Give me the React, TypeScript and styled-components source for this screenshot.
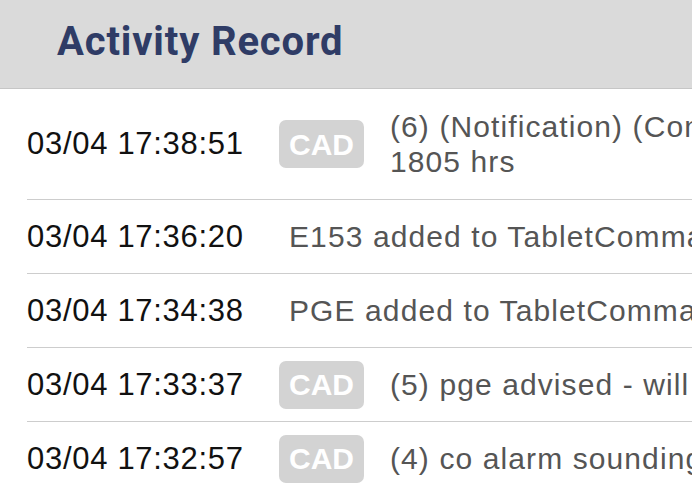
import React from "react";
import styled, { createGlobalStyle } from "styled-components";

const GlobalStyle = createGlobalStyle`
  html, body {
    margin: 0;
    padding: 0;
    background: #ffffff;
    overflow: hidden;
  }
  body {
    font-family: "Liberation Sans", Arial, sans-serif;
  }
`;

const Page = styled.div`
  width: 692px;
  height: 488px;
  overflow: hidden;
  background: #ffffff;
`;

const Header = styled.header`
  height: 89px;
  box-sizing: border-box;
  background: #dadada;
  border-bottom: 1px solid #c6c6c6;
  display: flex;
  align-items: center;
  padding-left: 57px;
`;

const Title = styled.h1`
  margin: 0;
  font-family: Roboto, "Liberation Sans", sans-serif;
  font-weight: 700;
  font-size: 40px;
  letter-spacing: 0.85px;
  color: #2f3c66;
  line-height: 1;
  padding-bottom: 4px;
`;

const List = styled.div`
  padding-left: 27px;
`;

const Row = styled.div<{ $tall?: boolean }>`
  display: flex;
  align-items: center;
  box-sizing: border-box;
  min-height: ${(p) => (p.$tall ? "111px" : "74px")};
  border-bottom: 1px solid #cdcdcd;
  white-space: nowrap;
`;

const Time = styled.div`
  flex: 0 0 252px;
  font-size: 31px;
  letter-spacing: 0.7px;
  color: #111111;
`;

const Badge = styled.span`
  flex: 0 0 auto;
  box-sizing: border-box;
  height: 48px;
  padding: 1px 10px 0;
  margin-right: 16px;
  display: flex;
  align-items: center;
  border-radius: 7px;
  background: #d3d3d3;
  color: #ffffff;
  font-weight: 700;
  font-size: 30px;
`;

const Message = styled.div`
  padding-left: 10px;
  font-size: 30px;
  letter-spacing: 1.1px;
  line-height: 35px;
  color: #555555;
`;

const Line = styled.span`
  display: block;
`;

type Entry = { time: string; cad: boolean; lines: string[] };

const entries: Entry[] = [
  {
    time: "03/04 17:38:51",
    cad: true,
    lines: ["(6) (Notification) (Comment) Units on scene at", "1805 hrs"],
  },
  { time: "03/04 17:36:20", cad: false, lines: ["E153 added to TabletCommand"] },
  { time: "03/04 17:34:38", cad: false, lines: ["PGE added to TabletCommand"] },
  { time: "03/04 17:33:37", cad: true, lines: ["(5) pge advised - will respond"] },
  { time: "03/04 17:32:57", cad: true, lines: ["(4) co alarm sounding in residence"] },
];

export default function App() {
  return (
    <Page>
      <GlobalStyle />
      <Header>
        <Title>Activity Record</Title>
      </Header>
      <List>
        {entries.map((e) => (
          <Row key={e.time} $tall={e.lines.length > 1}>
            <Time>{e.time}</Time>
            {e.cad && <Badge>CAD</Badge>}
            <Message>
              {e.lines.map((l) => (
                <Line key={l}>{l}</Line>
              ))}
            </Message>
          </Row>
        ))}
      </List>
    </Page>
  );
}
